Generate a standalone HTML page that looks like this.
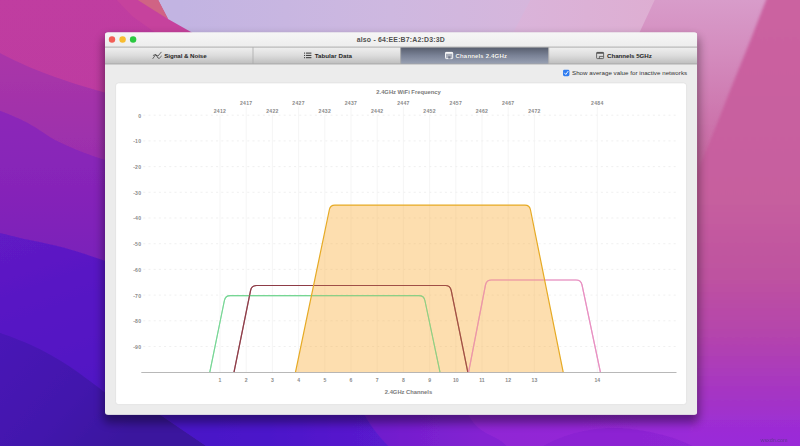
<!DOCTYPE html>
<html lang="en"><head><meta charset="utf-8"><title>also - 64:EE:B7:A2:D3:3D</title>
<style>
html,body{margin:0;padding:0;width:800px;height:446px;overflow:hidden;background:#7a28b8;}
svg{display:block;position:absolute;left:0;top:0;}
text{font-family:"Liberation Sans",sans-serif;}
.b{font-weight:bold;}
</style></head><body>
<svg width="800" height="446" viewBox="0 0 800 446">
<defs>
<linearGradient id="gL" x1="0" y1="0" x2="0" y2="1">
 <stop offset="0" stop-color="#c6429c"/><stop offset="0.12" stop-color="#bc3ca2"/><stop offset="0.28" stop-color="#a030aa"/>
 <stop offset="0.45" stop-color="#8826b6"/><stop offset="0.62" stop-color="#6a1cbc"/><stop offset="0.8" stop-color="#5218bc"/><stop offset="1" stop-color="#4416aa"/>
</linearGradient>
<linearGradient id="gTop" x1="0" y1="0" x2="1" y2="0">
 <stop offset="0" stop-color="#c2b4e2"/><stop offset="0.45" stop-color="#d0b0dc"/><stop offset="0.75" stop-color="#d8a4cc"/><stop offset="1" stop-color="#d08cc0"/>
</linearGradient>
<linearGradient id="gR" x1="0" y1="0" x2="0" y2="1">
 <stop offset="0" stop-color="#c8609c"/><stop offset="0.4" stop-color="#c45c9c"/><stop offset="0.65" stop-color="#b84aa6"/><stop offset="0.85" stop-color="#a636c4"/><stop offset="1" stop-color="#9a28dc"/>
</linearGradient>
<linearGradient id="gBot" x1="0" y1="0" x2="1" y2="0">
 <stop offset="0" stop-color="#4818b4"/><stop offset="0.3" stop-color="#4a18c0"/><stop offset="0.5" stop-color="#5a1ccc"/><stop offset="0.65" stop-color="#7c20d4"/><stop offset="0.85" stop-color="#9426d8"/><stop offset="1" stop-color="#9a28dc"/>
</linearGradient>
<linearGradient id="gTitle" x1="0" y1="0" x2="0" y2="1"><stop offset="0" stop-color="#f6f6f6"/><stop offset="1" stop-color="#ededed"/></linearGradient>
<linearGradient id="gTab" x1="0" y1="0" x2="0" y2="1">
 <stop offset="0" stop-color="#f0f0f0"/><stop offset="0.5" stop-color="#dcdcdc"/><stop offset="1" stop-color="#bdbdbd"/>
</linearGradient>
<linearGradient id="gSel" x1="0" y1="0" x2="0" y2="1">
 <stop offset="0" stop-color="#565c6c"/><stop offset="0.5" stop-color="#7a8296"/><stop offset="1" stop-color="#9aa2b4"/>
</linearGradient>
<filter id="sh" x="-10%" y="-10%" width="120%" height="130%"><feGaussianBlur stdDeviation="5"/></filter>
<clipPath id="winclip"><rect x="105" y="32.3" width="592.2" height="382.6" rx="3.2" ry="3.2"/></clipPath>
</defs>

<defs>
<linearGradient id="z1" x1="0" y1="0" x2="0" y2="1"><stop offset="0" stop-color="#c03ca0"/><stop offset="0.5" stop-color="#ba3aa2"/><stop offset="1" stop-color="#b036a6"/></linearGradient>
<linearGradient id="z2" gradientUnits="userSpaceOnUse" x1="0" y1="52" x2="0" y2="165"><stop offset="0" stop-color="#aa36a8"/><stop offset="0.5" stop-color="#a232aa"/><stop offset="1" stop-color="#9a2eae"/></linearGradient>
<linearGradient id="z3" gradientUnits="userSpaceOnUse" x1="0" y1="110" x2="0" y2="262"><stop offset="0" stop-color="#8c28b8"/><stop offset="0.5" stop-color="#8624b8"/><stop offset="1" stop-color="#7a20ba"/></linearGradient>
<linearGradient id="z4" gradientUnits="userSpaceOnUse" x1="0" y1="234" x2="60" y2="400"><stop offset="0" stop-color="#601ac4"/><stop offset="0.35" stop-color="#5918c4"/><stop offset="1" stop-color="#5016c4"/></linearGradient>
<linearGradient id="z5" gradientUnits="userSpaceOnUse" x1="0" y1="340" x2="120" y2="446"><stop offset="0" stop-color="#4816b6"/><stop offset="0.6" stop-color="#4214ac"/><stop offset="1" stop-color="#3a129e"/></linearGradient>
<linearGradient id="t1" gradientUnits="userSpaceOnUse" x1="180" y1="0" x2="530" y2="0"><stop offset="0" stop-color="#c2b4e2"/><stop offset="0.6" stop-color="#ceb8e0"/><stop offset="1" stop-color="#d6b6dc"/></linearGradient>
<linearGradient id="t2" gradientUnits="userSpaceOnUse" x1="515" y1="0" x2="660" y2="0"><stop offset="0" stop-color="#dab4da"/><stop offset="1" stop-color="#deaed2"/></linearGradient>
<linearGradient id="t3" gradientUnits="userSpaceOnUse" x1="700" y1="0" x2="700" y2="175"><stop offset="0" stop-color="#d89cca"/><stop offset="0.3" stop-color="#d48cbe"/><stop offset="0.7" stop-color="#cc74ac"/><stop offset="1" stop-color="#c6649e"/></linearGradient>
<linearGradient id="r1" gradientUnits="userSpaceOnUse" x1="0" y1="0" x2="0" y2="446"><stop offset="0" stop-color="#cb62a0"/><stop offset="0.45" stop-color="#c65e9e"/><stop offset="0.62" stop-color="#be52a0"/><stop offset="0.75" stop-color="#b444ac"/><stop offset="0.87" stop-color="#a636c2"/><stop offset="1" stop-color="#9a2ad8"/></linearGradient>
<linearGradient id="b1" gradientUnits="userSpaceOnUse" x1="160" y1="0" x2="380" y2="0"><stop offset="0" stop-color="#4814c6"/><stop offset="0.5" stop-color="#4c16ca"/><stop offset="1" stop-color="#5a1ace"/></linearGradient>
<linearGradient id="b2" gradientUnits="userSpaceOnUse" x1="360" y1="0" x2="480" y2="0"><stop offset="0" stop-color="#6c1ccc"/><stop offset="1" stop-color="#8422d2"/></linearGradient>
<linearGradient id="b3" gradientUnits="userSpaceOnUse" x1="460" y1="0" x2="700" y2="0"><stop offset="0" stop-color="#8e26d4"/><stop offset="1" stop-color="#9a2ad8"/></linearGradient>
<linearGradient id="b4" gradientUnits="userSpaceOnUse" x1="0" y1="408" x2="0" y2="446"><stop offset="0" stop-color="#9a2ad8" stop-opacity="0"/><stop offset="1" stop-color="#9a2ad8" stop-opacity="0.9"/></linearGradient>
<filter id="bl" x="-2%" y="-2%" width="104%" height="104%"><feGaussianBlur stdDeviation="0.7"/></filter>
<filter id="bl2" x="-10%" y="-5%" width="120%" height="110%"><feGaussianBlur stdDeviation="1.6"/></filter>
</defs>
<g filter="url(#bl)">
<rect x="-5" y="-5" width="810" height="456" fill="url(#z1)"/>
<path d="M-5,50 C8,58 30,68 55,77 C75,84 92,89 110,94 L130,446 L-5,446 Z" fill="url(#z2)"/>
<path d="M-5,109 C10,114 20,119 27,122.5 C40,130 48,136 55,140 C75,150 92,156 112,162 L130,446 L-5,446 Z" fill="url(#z3)"/>
<path d="M-5,232 C10,235 20,238 27,239.5 C45,243 58,246 68.5,249 C85,254 97,258 112,263 L400,300 L400,446 L-5,446 Z" fill="url(#z4)"/>
<path d="M-5,331 C12,337 28,343 39.5,349 C55,357 68,365 79,373 C90,381 98,387 105,392.5 C125,404 145,410 161,415.5 L212,450 L-5,450 Z" fill="url(#z5)"/>
<path d="M161,415 L212,450 L400,450 L400,400 L161,400 Z" fill="url(#b1)"/>
<path d="M358,400 C364,418 376,434 392,450 L530,450 L530,400 Z" fill="url(#b2)"/>
<path d="M462,400 C468,420 478,430 492,436 C500,440 506,444 510,450 L720,450 L720,400 Z" fill="url(#b3)"/>
<path d="M112,-5 L133,-5 L168,19 L191,32 L197,36 L160,36 L132,16 Z" fill="#c8469c" opacity="0.75"/>
<path d="M157.5,-5 L158,0 L168,19 L191,32 L197,36 L540,36 L540,-5 Z" fill="url(#t1)"/>
<path d="M133,-3 L158.5,-3 L158.3,0 L168.3,19.3 Z" fill="#d06484"/>
<path d="M533,-5 L512,35 L660,35 L660,-5 Z" fill="url(#t2)"/>
<path d="M657,-5 L636,40 L690,40 L690,200 L810,200 L810,-5 Z" fill="url(#t3)"/>
<path d="M768,-5 L750.5,40 L734,80.6 L718,121 L702,161 L694,182 L690,450 L810,450 L810,-5 Z" fill="url(#r1)" filter="url(#bl2)"/>
<rect x="688" y="404" width="125" height="48" fill="url(#b4)"/>
<path d="M537,450 C560,434 590,427 620,428 C650,430 680,438 700,450 Z" fill="#8420d0" opacity="0.5"/>
</g>
<rect x="103.0" y="36.3" width="596.2" height="386.6" rx="6" fill="#000" opacity="0.38" filter="url(#sh)"/>
<g clip-path="url(#winclip)">
<rect x="105.0" y="32.3" width="592.2" height="382.6" fill="#ececec"/>
<rect x="105.0" y="32.3" width="592.2" height="14.8" fill="url(#gTitle)"/>
<rect x="105.0" y="47.1" width="592.2" height="16.9" fill="url(#gTab)"/>
<rect x="400.5" y="47.1" width="148" height="16.9" fill="url(#gSel)"/>
<rect x="105.0" y="46.6" width="592.2" height="1" fill="#acacac"/>
<rect x="105.0" y="63.6" width="592.2" height="0.8" fill="#a2a2a2"/>
<rect x="252.6" y="47.1" width="0.8" height="16.9" fill="#ababab"/>
<rect x="400.3" y="47.1" width="0.8" height="16.9" fill="#ababab"/>
<rect x="548.4" y="47.1" width="0.8" height="16.9" fill="#ababab"/>
</g>
<circle cx="112.0" cy="39.5" r="3.2" fill="#f25e57"/>
<circle cx="122.6" cy="39.5" r="3.2" fill="#f8bc30"/>
<circle cx="133.1" cy="39.5" r="3.2" fill="#2bc840"/>
<text x="356.7" y="41.8" font-size="6.9" textLength="88" lengthAdjust="spacing" fill="#505050" class="b">also - 64:EE:B7:A2:D3:3D</text>
<text x="164.2" y="58" font-size="6.2" textLength="42.5" lengthAdjust="spacing" fill="#262626" class="b">Signal &amp; Noise</text>
<text x="314.7" y="58" font-size="6.2" textLength="37.3" lengthAdjust="spacing" fill="#262626" class="b">Tabular Data</text>
<text x="455.8" y="58.4" font-size="6.2" textLength="51.5" lengthAdjust="spacing" fill="#3a3f4c" class="b">Channels 2.4GHz</text>
<text x="455.5" y="58" font-size="6.2" textLength="51.5" lengthAdjust="spacing" fill="#fff" class="b">Channels 2.4GHz</text>
<text x="607" y="58" font-size="6.2" textLength="44.8" lengthAdjust="spacing" fill="#262626" class="b">Channels 5GHz</text>
<path d="M152.9,58.5 L155.4,55 L158,56 L161.2,52.2 M153.3,55.4 L155.8,54.4 L158,58.1 L159.4,58.2 L161.4,56.2" fill="none" stroke="#3a3a3a" stroke-width="0.75" stroke-linecap="round" stroke-linejoin="round"/>
<rect x="304" y="52.6" width="1.1" height="1" fill="#333"/><rect x="306" y="52.6" width="5.4" height="1" fill="#333"/>
<rect x="304" y="54.9" width="1.1" height="1" fill="#333"/><rect x="306" y="54.9" width="5.4" height="1" fill="#333"/>
<rect x="304" y="57.2" width="1.1" height="1" fill="#333"/><rect x="306" y="57.2" width="5.4" height="1" fill="#333"/>
<rect x="445.5" y="52.4" width="7.2" height="6.2" rx="0.8" fill="#fff" fill-opacity="0.35" stroke="#fff" stroke-width="0.9"/><path d="M445.5,53 H452.7" stroke="#fff" stroke-width="1.4"/><path d="M448.2,58.6 V56.3 H450.6 V58.6" fill="#6e7588" stroke="none"/>
<rect x="596.6" y="52.4" width="7" height="6.2" rx="0.8" fill="none" stroke="#4a4a4a" stroke-width="0.8"/><path d="M596.6,53 H603.6" stroke="#4a4a4a" stroke-width="1.4"/><path d="M599.4,58.6 V56.4 H603.4" fill="none" stroke="#4a4a4a" stroke-width="0.8"/>
<rect x="563" y="69.8" width="6.4" height="6.4" rx="1.4" fill="#2f7cf0"/>
<path d="M564.6,73.1 L565.8,74.5 L568,71.4" fill="none" stroke="#fff" stroke-width="0.9" stroke-linecap="round" stroke-linejoin="round"/>
<text x="572" y="75.3" font-size="6.2" textLength="115.1" lengthAdjust="spacing" fill="#333">Show average value for inactive networks</text>
<rect x="115.6" y="82.9" width="571" height="321.7" rx="3" fill="#ffffff" stroke="#dedede" stroke-width="0.7"/>
<text x="408.5" y="93.5" font-size="5.8" text-anchor="middle" fill="#7a7a7a" class="b">2.4GHz WiFi Frequency</text>
<text x="408.5" y="393.5" font-size="5.8" text-anchor="middle" fill="#7a7a7a" class="b">2.4GHz Channels</text>
<line x1="143.3" y1="115.2" x2="676.5" y2="115.2" stroke="#eaeaea" stroke-width="0.7" stroke-dasharray="2 3.2"/>
<text x="141.4" y="117.6" font-size="5.1" letter-spacing="0.3" text-anchor="end" fill="#8a8a8a" class="b">0</text>
<line x1="143.3" y1="140.9" x2="676.5" y2="140.9" stroke="#eaeaea" stroke-width="0.7" stroke-dasharray="2 3.2"/>
<text x="141.4" y="143.3" font-size="5.1" letter-spacing="0.3" text-anchor="end" fill="#8a8a8a" class="b">-10</text>
<line x1="143.3" y1="166.6" x2="676.5" y2="166.6" stroke="#eaeaea" stroke-width="0.7" stroke-dasharray="2 3.2"/>
<text x="141.4" y="169.0" font-size="5.1" letter-spacing="0.3" text-anchor="end" fill="#8a8a8a" class="b">-20</text>
<line x1="143.3" y1="192.3" x2="676.5" y2="192.3" stroke="#eaeaea" stroke-width="0.7" stroke-dasharray="2 3.2"/>
<text x="141.4" y="194.7" font-size="5.1" letter-spacing="0.3" text-anchor="end" fill="#8a8a8a" class="b">-30</text>
<line x1="143.3" y1="218.0" x2="676.5" y2="218.0" stroke="#eaeaea" stroke-width="0.7" stroke-dasharray="2 3.2"/>
<text x="141.4" y="220.4" font-size="5.1" letter-spacing="0.3" text-anchor="end" fill="#8a8a8a" class="b">-40</text>
<line x1="143.3" y1="243.7" x2="676.5" y2="243.7" stroke="#eaeaea" stroke-width="0.7" stroke-dasharray="2 3.2"/>
<text x="141.4" y="246.1" font-size="5.1" letter-spacing="0.3" text-anchor="end" fill="#8a8a8a" class="b">-50</text>
<line x1="143.3" y1="269.4" x2="676.5" y2="269.4" stroke="#eaeaea" stroke-width="0.7" stroke-dasharray="2 3.2"/>
<text x="141.4" y="271.8" font-size="5.1" letter-spacing="0.3" text-anchor="end" fill="#8a8a8a" class="b">-60</text>
<line x1="143.3" y1="295.1" x2="676.5" y2="295.1" stroke="#eaeaea" stroke-width="0.7" stroke-dasharray="2 3.2"/>
<text x="141.4" y="297.5" font-size="5.1" letter-spacing="0.3" text-anchor="end" fill="#8a8a8a" class="b">-70</text>
<line x1="143.3" y1="320.8" x2="676.5" y2="320.8" stroke="#eaeaea" stroke-width="0.7" stroke-dasharray="2 3.2"/>
<text x="141.4" y="323.2" font-size="5.1" letter-spacing="0.3" text-anchor="end" fill="#8a8a8a" class="b">-80</text>
<line x1="143.3" y1="346.5" x2="676.5" y2="346.5" stroke="#eaeaea" stroke-width="0.7" stroke-dasharray="2 3.2"/>
<text x="141.4" y="348.9" font-size="5.1" letter-spacing="0.3" text-anchor="end" fill="#8a8a8a" class="b">-90</text>
<line x1="220.0" y1="114.3" x2="220.0" y2="372.2" stroke="#f2f2f2" stroke-width="0.8"/>
<text x="220.0" y="112.8" font-size="5.1" letter-spacing="0.3" text-anchor="middle" fill="#8a8a8a" class="b">2412</text>
<text x="220.0" y="382.2" font-size="5.1" text-anchor="middle" fill="#8a8a8a" class="b">1</text>
<line x1="246.2" y1="106.5" x2="246.2" y2="372.2" stroke="#f2f2f2" stroke-width="0.8"/>
<text x="246.2" y="105.0" font-size="5.1" letter-spacing="0.3" text-anchor="middle" fill="#8a8a8a" class="b">2417</text>
<text x="246.2" y="382.2" font-size="5.1" text-anchor="middle" fill="#8a8a8a" class="b">2</text>
<line x1="272.4" y1="114.3" x2="272.4" y2="372.2" stroke="#f2f2f2" stroke-width="0.8"/>
<text x="272.4" y="112.8" font-size="5.1" letter-spacing="0.3" text-anchor="middle" fill="#8a8a8a" class="b">2422</text>
<text x="272.4" y="382.2" font-size="5.1" text-anchor="middle" fill="#8a8a8a" class="b">3</text>
<line x1="298.6" y1="106.5" x2="298.6" y2="372.2" stroke="#f2f2f2" stroke-width="0.8"/>
<text x="298.6" y="105.0" font-size="5.1" letter-spacing="0.3" text-anchor="middle" fill="#8a8a8a" class="b">2427</text>
<text x="298.6" y="382.2" font-size="5.1" text-anchor="middle" fill="#8a8a8a" class="b">4</text>
<line x1="324.8" y1="114.3" x2="324.8" y2="372.2" stroke="#f2f2f2" stroke-width="0.8"/>
<text x="324.8" y="112.8" font-size="5.1" letter-spacing="0.3" text-anchor="middle" fill="#8a8a8a" class="b">2432</text>
<text x="324.8" y="382.2" font-size="5.1" text-anchor="middle" fill="#8a8a8a" class="b">5</text>
<line x1="351.0" y1="106.5" x2="351.0" y2="372.2" stroke="#f2f2f2" stroke-width="0.8"/>
<text x="351.0" y="105.0" font-size="5.1" letter-spacing="0.3" text-anchor="middle" fill="#8a8a8a" class="b">2437</text>
<text x="351.0" y="382.2" font-size="5.1" text-anchor="middle" fill="#8a8a8a" class="b">6</text>
<line x1="377.2" y1="114.3" x2="377.2" y2="372.2" stroke="#f2f2f2" stroke-width="0.8"/>
<text x="377.2" y="112.8" font-size="5.1" letter-spacing="0.3" text-anchor="middle" fill="#8a8a8a" class="b">2442</text>
<text x="377.2" y="382.2" font-size="5.1" text-anchor="middle" fill="#8a8a8a" class="b">7</text>
<line x1="403.4" y1="106.5" x2="403.4" y2="372.2" stroke="#f2f2f2" stroke-width="0.8"/>
<text x="403.4" y="105.0" font-size="5.1" letter-spacing="0.3" text-anchor="middle" fill="#8a8a8a" class="b">2447</text>
<text x="403.4" y="382.2" font-size="5.1" text-anchor="middle" fill="#8a8a8a" class="b">8</text>
<line x1="429.6" y1="114.3" x2="429.6" y2="372.2" stroke="#f2f2f2" stroke-width="0.8"/>
<text x="429.6" y="112.8" font-size="5.1" letter-spacing="0.3" text-anchor="middle" fill="#8a8a8a" class="b">2452</text>
<text x="429.6" y="382.2" font-size="5.1" text-anchor="middle" fill="#8a8a8a" class="b">9</text>
<line x1="455.8" y1="106.5" x2="455.8" y2="372.2" stroke="#f2f2f2" stroke-width="0.8"/>
<text x="455.8" y="105.0" font-size="5.1" letter-spacing="0.3" text-anchor="middle" fill="#8a8a8a" class="b">2457</text>
<text x="455.8" y="382.2" font-size="5.1" text-anchor="middle" fill="#8a8a8a" class="b">10</text>
<line x1="482.0" y1="114.3" x2="482.0" y2="372.2" stroke="#f2f2f2" stroke-width="0.8"/>
<text x="482.0" y="112.8" font-size="5.1" letter-spacing="0.3" text-anchor="middle" fill="#8a8a8a" class="b">2462</text>
<text x="482.0" y="382.2" font-size="5.1" text-anchor="middle" fill="#8a8a8a" class="b">11</text>
<line x1="508.2" y1="106.5" x2="508.2" y2="372.2" stroke="#f2f2f2" stroke-width="0.8"/>
<text x="508.2" y="105.0" font-size="5.1" letter-spacing="0.3" text-anchor="middle" fill="#8a8a8a" class="b">2467</text>
<text x="508.2" y="382.2" font-size="5.1" text-anchor="middle" fill="#8a8a8a" class="b">12</text>
<line x1="534.4" y1="114.3" x2="534.4" y2="372.2" stroke="#f2f2f2" stroke-width="0.8"/>
<text x="534.4" y="112.8" font-size="5.1" letter-spacing="0.3" text-anchor="middle" fill="#8a8a8a" class="b">2472</text>
<text x="534.4" y="382.2" font-size="5.1" text-anchor="middle" fill="#8a8a8a" class="b">13</text>
<line x1="597.3" y1="106.5" x2="597.3" y2="372.2" stroke="#f2f2f2" stroke-width="0.8"/>
<text x="597.3" y="105.0" font-size="5.1" letter-spacing="0.3" text-anchor="middle" fill="#8a8a8a" class="b">2484</text>
<text x="597.3" y="382.2" font-size="5.1" text-anchor="middle" fill="#8a8a8a" class="b">14</text>
<path d="M209.8,372.2 L224.4,300.5 Q225.4,295.6 230.4,295.6 L418.9,295.6 Q423.9,295.6 424.9,300.5 L440.0,372.2" fill="none" stroke="#76d694" stroke-width="1.1"/>
<path d="M234.0,372.2 L250.6,290.4 Q251.6,285.5 256.6,285.5 L445.2,285.5 Q450.2,285.5 451.2,290.4 L467.8,372.2" fill="none" stroke="#8e3c48" stroke-width="1.2"/>
<path d="M468.6,372.2 L485.5,284.9 Q486.5,280.0 491.5,280.0 L576.0,280.0 Q581.0,280.0 582.0,284.9 L600.4,372.2" fill="none" stroke="#e890c2" stroke-width="1.2"/>
<path d="M295.5,372.2 L329.4,209.5 Q330.3,205.1 334.8,205.1 L525.0,205.1 Q529.5,205.1 530.4,209.5 L563.2,372.2Z" fill="#fbb040" fill-opacity="0.42" stroke="none"/>
<path d="M209.8,372.2 L224.4,300.5 Q225.4,295.6 230.4,295.6 L418.9,295.6 Q423.9,295.6 424.9,300.5 L440.0,372.2" fill="none" stroke="#76d694" stroke-width="1.1" opacity="0.6"/>
<path d="M234.0,372.2 L250.6,290.4 Q251.6,285.5 256.6,285.5 L445.2,285.5 Q450.2,285.5 451.2,290.4 L467.8,372.2" fill="none" stroke="#8e3c48" stroke-width="1.2" opacity="0.6"/>
<path d="M468.6,372.2 L485.5,284.9 Q486.5,280.0 491.5,280.0 L576.0,280.0 Q581.0,280.0 582.0,284.9 L600.4,372.2" fill="none" stroke="#e890c2" stroke-width="1.2" opacity="0.6"/>
<path d="M295.5,372.2 L329.4,209.5 Q330.3,205.1 334.8,205.1 L525.0,205.1 Q529.5,205.1 530.4,209.5 L563.2,372.2" fill="none" stroke="#e6aa24" stroke-width="1.2"/>
<line x1="141.3" y1="372.5" x2="676.5" y2="372.5" stroke="#a6a6a6" stroke-width="0.8"/>
<text x="774" y="441.5" font-size="5.4" text-anchor="middle" fill="#5a3a86" opacity="0.85">wsxdn.com</text>
</svg></body></html>
